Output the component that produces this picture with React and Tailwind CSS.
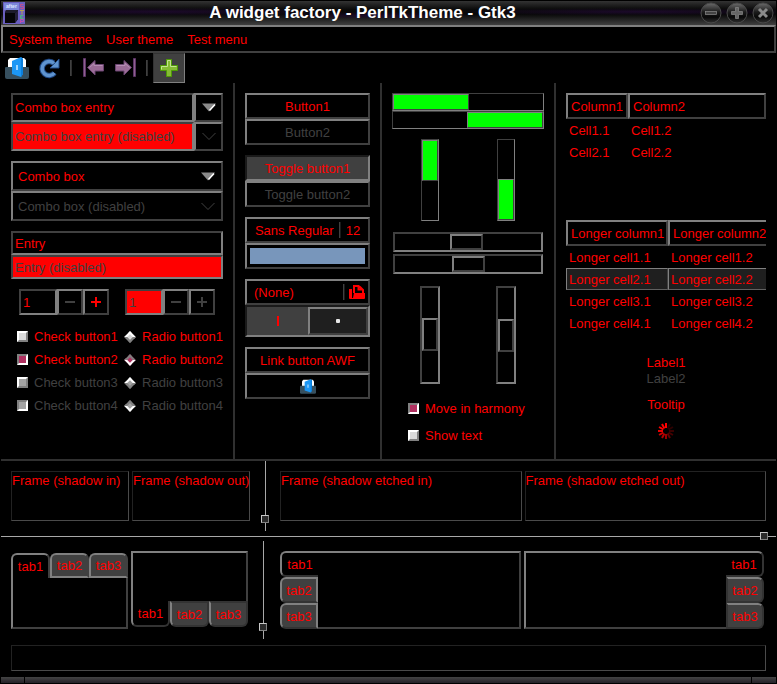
import React from "react";

const RAISED = "border-2 border-t-[#808080] border-l-[#808080] border-r-[#404040] border-b-[#404040]";
const SUNKEN = "border-2 border-t-[#404040] border-l-[#404040] border-r-[#808080] border-b-[#808080]";
const PRESSED = "border-2 border-t-[#1a1a1a] border-l-[#1a1a1a] border-r-[#808080] border-b-[#808080] bg-[#404040]";
const THIN_SUNKEN = "border border-t-[#404040] border-l-[#404040] border-r-[#808080] border-b-[#808080]";
const FRAME = "border border-t-[#222222] border-l-[#222222] border-r-[#4a4a4a] border-b-[#4a4a4a]";

/* ---------- icons ---------- */

function AfterStepIcon() {
  return (
    <svg width="22" height="22" viewBox="0 0 22 22" aria-hidden="true">
      <rect width="22" height="22" fill="#6a5fc0" />
      <rect x="1" y="1" width="15" height="7" fill="#7b86d8" />
      <path d="M3 8h12v9l-3 4H2V11z" fill="#050508" />
      <path d="M3 8h12l-3 3H2z" fill="#1d1c2c" />
      <path d="M12 11l3-3v9l-3 4z" fill="#24203a" />
      <text x="3" y="6" fontSize="5" fontFamily="Liberation Sans, sans-serif" fontWeight="bold" fill="#dfe6ff">after</text>
      <g fill="none" strokeWidth="1">
        <path d="M20.500 2.500h-3v2h3v2h-3" stroke="#c05090" />
        <path d="M17 8.500h4M19 8.500v4" stroke="#b8a050" />
        <path d="M20.500 13.500h-3v3h3M17.500 15h2" stroke="#50b080" />
        <path d="M17.500 21v-3.500h3v2h-3" stroke="#c050b0" />
      </g>
    </svg>
  );
}

function WindowButton({ kind, label }) {
  return (
    <button type="button" aria-label={label} className="block">
      <svg width="22" height="22" viewBox="0 0 22 22">
        <defs>
          <linearGradient id={"orb-" + kind} x1="0" y1="0" x2="0" y2="1">
            <stop offset="0" stopColor="#6c6c6c" />
            <stop offset="0.45" stopColor="#1c1c1c" />
            <stop offset="0.7" stopColor="#080808" />
            <stop offset="1" stopColor="#303030" />
          </linearGradient>
        </defs>
        <circle cx="11" cy="11" r="10" fill={"url(#orb-" + kind + ")"} stroke="#4a4a4a" />
        {kind === "min" && <rect x="5.5" y="9.5" width="11" height="3" fill="#444" stroke="#8a8a8a" strokeWidth="0.7" />}
        {kind === "max" && (
          <path d="M9.500 5.500h3v4h4v3h-4v4h-3v-4h-4v-3h4z" fill="#666" stroke="#8a8a8a" strokeWidth="0.7" />
        )}
        {kind === "close" && <path d="M7 7l8 8M15 7l-8 8" stroke="#8a8a8a" strokeWidth="3" />}
      </svg>
    </button>
  );
}

function DoorIcon({ width, height }) {
  return (
    <svg width={width} height={height} viewBox="0 0 24 22" aria-hidden="true">
      <path d="M3 3l2-2h14l2 2v9H3z" fill="#ffffff" />
      <path d="M0 11q0-1 1-1h22q1 0 1 1v9q0 2-2 2H2q-2 0-2-2z" fill="#37505f" />
      <path d="M7 4L16 0l2 2v15l-2 3-9-3z" fill="#1c97f5" />
      <path d="M16 0l2 2v15l-2 3z" fill="#0b7fdc" />
      <path d="M11 8h2v5h-2z" fill="#9fd6ff" />
    </svg>
  );
}

function ReloadIcon() {
  return (
    <svg width="21" height="21" viewBox="0 0 21 21" aria-hidden="true">
      <path d="M15.500 15A7 7 0 1 1 14.500 5" fill="none" stroke="#204a87" strokeWidth="5.500" />
      <path d="M20 1v9h-9z" fill="#5f94cf" stroke="#204a87" strokeWidth="1" />
      <path d="M15.500 15A7 7 0 1 1 15 5.500" fill="none" stroke="#5f94cf" strokeWidth="3.500" />
    </svg>
  );
}

function ArrowIcon({ last }) {
  return (
    <svg width="21" height="20" viewBox="0 0 21 20" aria-hidden="true">
      <g transform={last ? "translate(21 0) scale(-1 1)" : undefined}>
        <path d="M0.500 0.500h2v18h-2z" fill="#8f5f8f" stroke="#5c3566" />
        <path d="M4.500 9.500L12 2.500v4h8.500v6.500H12v4z" fill="#9b6c97" stroke="#6a4570" />
        <path d="M6.500 9.500l4.500-4v2h8.500" fill="none" stroke="#b58fb3" strokeWidth="1" />
      </g>
    </svg>
  );
}

function PlusIcon() {
  return (
    <svg width="18" height="18" viewBox="0 0 18 18" aria-hidden="true">
      <path d="M6.500 0.500h5v6h6v5h-6v6h-5v-6h-6v-5h6z" fill="#86bb35" stroke="#4e9a06" />
      <path d="M7.500 7.500v-6h3v6h6M1.500 10.500v-3h6" fill="none" stroke="#c5e592" />
    </svg>
  );
}

function FolderIcon() {
  return (
    <svg width="16" height="16" viewBox="0 0 16 16" aria-hidden="true">
      <path d="M0 5h3v9h1v1H1q-1 0-1-1z" fill="#f00" />
      <path d="M5 9V2h5l4 4v3M9.500 1v4.500H14" fill="none" stroke="#f00" strokeWidth="2" />
      <path d="M5 9h11v5q0 1-1 1H2l2-1z" fill="#f00" />
    </svg>
  );
}

function ArrowDown({ disabled }) {
  return (
    <svg width="14" height="9" viewBox="0 0 14 9" aria-hidden="true">
      {disabled ? (
        <path d="M0.500 1L7 7.500 13.500 1" fill="none" stroke="#404040" />
      ) : (
        <>
          <path d="M0 0.500h14L7 8.500z" fill="#8a8a8a" />
          <path d="M13 1.500L7.500 7.500" fill="none" stroke="#fff" strokeWidth="1.600" />
        </>
      )}
    </svg>
  );
}

function Spinner() {
  const spokes = [1, 0.15, 0.18, 0.22, 0.28, 0.4, 0.6, 0.7, 0.8, 0.9, 1, 1];
  return (
    <svg width="16" height="16" viewBox="0 0 16 16" role="img" aria-label="Loading">
      {spokes.map((o, i) => (
        <path key={i} d="M8 0v5" stroke="#f00" strokeWidth="2" opacity={o} transform={"rotate(" + i * 30 + " 8 8)"} />
      ))}
    </svg>
  );
}

/* ---------- small widgets ---------- */

function Button({ children, disabled, on }) {
  return (
    <button
      type="button"
      disabled={disabled}
      aria-pressed={on}
      className={`flex h-[26px] w-full items-center justify-center disabled:text-[#404040] ${on ? PRESSED : RAISED}`}
    >
      {children}
    </button>
  );
}

function VLine() {
  return <span className="h-4 w-0.5 border-l border-[#404040] bg-[#1a1a1a]" />;
}

function Check({ children, disabled, on, row = "h-[23px]" }) {
  return (
    <label className={`flex items-center gap-1.5 whitespace-nowrap ${row} ${disabled ? "text-[#404040]" : ""}`}>
      <input
        type="checkbox"
        defaultChecked={on}
        disabled={disabled}
        className={`size-[11px] shrink-0 appearance-none border-2 border-t-white border-l-white border-r-[#808080] border-b-[#808080] checked:border-t-[#808080] checked:border-l-[#808080] checked:border-r-white checked:border-b-white ${
          disabled ? "bg-[#a3a3a3]" : "bg-[#d9d9d9] checked:bg-[#b03060]"
        }`}
      />
      {children}
    </label>
  );
}

function Radio({ children, disabled, on, name }) {
  return (
    <label className={`flex h-[23px] items-center gap-1.5 whitespace-nowrap ${disabled ? "text-[#404040]" : ""}`}>
      <span className="flex w-[11px] pl-px">
        <input
          type="radio"
          name={name}
          defaultChecked={on}
          disabled={disabled}
          className={`size-2 shrink-0 rotate-45 appearance-none border-2 border-t-white border-l-white border-r-[#808080] border-b-[#808080] checked:border-t-[#808080] checked:border-l-[#808080] checked:border-r-white checked:border-b-white ${
            disabled ? "bg-[#a3a3a3]" : "bg-[#d9d9d9] checked:bg-[#b03060]"
          }`}
        />
      </span>
      {children}
    </label>
  );
}

function ComboEntry({ value, disabled }) {
  return (
    <div className="flex h-[29px]">
      <input
        aria-label="Combo box entry"
        defaultValue={value}
        disabled={disabled}
        className={`min-w-0 flex-1 px-0.5 disabled:bg-[#f00] disabled:text-[#404040] ${SUNKEN}`}
      />
      <button type="button" aria-label="Open list" disabled={disabled} className={`flex w-[29px] items-center justify-center ${RAISED}`}>
        <ArrowDown disabled={disabled} />
      </button>
    </div>
  );
}

function Combo({ value, disabled }) {
  return (
    <div className="relative">
      <select
        aria-label="Combo box"
        disabled={disabled}
        className={`block h-[30px] w-full appearance-none bg-black px-[5px] pt-px disabled:text-[#404040] disabled:opacity-100 ${RAISED}`}
      >
        <option>{value}</option>
      </select>
      <span className="pointer-events-none absolute inset-y-0 right-2 flex items-center">
        <ArrowDown disabled={disabled} />
      </span>
    </div>
  );
}

function Entry({ value, disabled }) {
  return (
    <input
      aria-label="Entry"
      defaultValue={value}
      disabled={disabled}
      className={`block h-6 w-full px-0.5 disabled:bg-[#f00] disabled:text-[#404040] ${SUNKEN}`}
    />
  );
}

function Spin({ disabled }) {
  const btn = `flex w-[26px] items-center justify-center text-[#f00] disabled:text-[#404040] ${RAISED}`;
  return (
    <div className="flex h-[26px]">
      <input
        aria-label="Amount"
        defaultValue="1"
        disabled={disabled}
        className={`w-[38px] px-0.5 disabled:bg-[#f00] disabled:text-[#404040] ${SUNKEN}`}
      />
      <button type="button" aria-label="Decrease" disabled={disabled} className={btn}>
        <svg width="10" height="10" viewBox="0 0 10 10"><path d="M0 5h10" stroke="#404040" strokeWidth="2" /></svg>
      </button>
      <button type="button" aria-label="Increase" disabled={disabled} className={btn}>
        <svg width="10" height="10" viewBox="0 0 10 10"><path d="M0 5h10M5 0v10" stroke="currentColor" strokeWidth="2" /></svg>
      </button>
    </div>
  );
}

const FILL = "border border-t-[#808080] border-l-[#808080] border-r-[#404040] border-b-[#404040] bg-[#0f0]";

function HBar({ inverted }) {
  return (
    <div role="progressbar" aria-label="Progress" aria-valuenow={50} className={`flex h-[18px] ${inverted ? "justify-end" : ""} ${THIN_SUNKEN}`}>
      <div className={`w-[76px] ${FILL}`} />
    </div>
  );
}

function VBar({ inverted }) {
  return (
    <div role="progressbar" aria-label="Progress" aria-valuenow={50} className={`flex h-[82px] w-[18px] flex-col ${inverted ? "justify-end" : ""} ${THIN_SUNKEN}`}>
      <div className={`h-[41px] ${FILL}`} />
    </div>
  );
}

const THUMB =
  "[&::-webkit-slider-thumb]:appearance-none [&::-webkit-slider-thumb]:border-2 [&::-webkit-slider-thumb]:border-t-[#808080] [&::-webkit-slider-thumb]:border-l-[#808080] [&::-webkit-slider-thumb]:border-r-[#404040] [&::-webkit-slider-thumb]:border-b-[#404040] [&::-webkit-slider-thumb]:bg-black";

function HScale({ value }) {
  return (
    <div className="p-px">
      <input
        type="range"
        aria-label="Horizontal scale"
        defaultValue={value}
        className={`block h-5 w-full appearance-none [&::-webkit-slider-thumb]:h-4 [&::-webkit-slider-thumb]:w-[33px] ${THUMB} ${SUNKEN}`}
      />
    </div>
  );
}

function VScale({ value }) {
  return (
    <input
      type="range"
      aria-label="Vertical scale"
      defaultValue={value}
      className={`block h-[98px] w-5 appearance-none [writing-mode:vertical-lr] [&::-webkit-slider-thumb]:h-[33px] [&::-webkit-slider-thumb]:w-4 ${THUMB} ${SUNKEN}`}
    />
  );
}

function Tree({ widths, heads, rows, selected, cut }) {
  return (
    <table className="w-full table-fixed border-separate border-spacing-0 text-left">
      <colgroup>
        <col className={widths} />
        <col />
      </colgroup>
      <thead>
        <tr>
          {heads.map((h, i) => (
            <th
              key={h}
              scope="col"
              className={`h-[26px] overflow-hidden p-0 pl-[3px] font-normal whitespace-nowrap ${RAISED} ${cut && i === 1 ? "border-r-0" : ""}`}
            >
              {h}
            </th>
          ))}
        </tr>
      </thead>
      <tbody>
        {rows.map((r, n) => (
          <tr key={n}>
            {r.map((c, i) => (
              <td
                key={c}
                className={`h-[22px] border-y border-l p-0 pl-0.5 whitespace-nowrap ${
                  n === selected ? "border-t-[#808080] border-b-[#606060] border-l-[#808080] bg-[#1f1f1f]" : "border-transparent"
                } ${n === selected && i === 0 ? "border-r border-r-[#404040]" : ""}`}
              >
                {c}
              </td>
            ))}
          </tr>
        ))}
      </tbody>
    </table>
  );
}

function Frame({ children }) {
  return <div className={`h-[50px] min-w-0 flex-1 overflow-hidden leading-[18px] whitespace-nowrap ${FRAME}`}>{children}</div>;
}

function Handle() {
  return <span className="block size-2 border border-t-[#c8c8c8] border-l-[#c8c8c8] border-r-[#808080] border-b-[#808080] bg-[#2b2b2b]" />;
}

function VSash() {
  return (
    <div className="flex w-2.5 flex-col items-center">
      <span className="w-px flex-1 bg-[#a8a8a8]" />
      <Handle />
      <span className="h-2 w-px bg-[#a8a8a8]" />
    </div>
  );
}

const TABS = ["tab1", "tab2", "tab3"];

function NotebookTop() {
  return (
    <div className="mt-0.5 flex min-w-0 flex-1 flex-col">
      <div role="tablist" className="flex h-[25px]">
        {TABS.map((t, i) => (
          <button
            key={t}
            type="button"
            role="tab"
            aria-selected={i === 0}
            className={`flex-1 rounded-t-md border-2 border-t-[#808080] border-l-[#808080] border-r-[#404040] ${
              i === 0 ? "border-b-0" : "border-b-[#808080] bg-[#404040]"
            }`}
          >
            {t}
          </button>
        ))}
      </div>
      <div role="tabpanel" className="flex-1 border-2 border-t-0 border-l-[#808080] border-r-[#404040] border-b-[#404040]" />
    </div>
  );
}

function NotebookBottom() {
  return (
    <div className="mb-0.5 flex min-w-0 flex-1 flex-col">
      <div role="tabpanel" className="flex-1 border-2 border-b-0 border-t-[#808080] border-l-[#808080] border-r-[#404040]" />
      <div role="tablist" className="flex h-[26px]">
        {TABS.map((t, i) => (
          <button
            key={t}
            type="button"
            role="tab"
            aria-selected={i === 0}
            className={`flex-1 rounded-b-md border-2 border-l-[#808080] border-r-[#333333] border-b-[#333333] ${
              i === 0 ? "border-t-0" : "border-t-[#333333] bg-[#404040]"
            }`}
          >
            {t}
          </button>
        ))}
      </div>
    </div>
  );
}

function NotebookLeft() {
  return (
    <div className="flex min-w-0 flex-1">
      <div role="tablist" className="flex w-[38px] flex-col">
        {TABS.map((t, i) => (
          <button
            key={t}
            type="button"
            role="tab"
            aria-selected={i === 0}
            className={`flex-1 rounded-l-md border-2 border-t-[#808080] border-l-[#808080] border-b-[#333333] ${
              i === 0 ? "border-r-0" : "border-r-[#808080] bg-[#404040]"
            }`}
          >
            {t}
          </button>
        ))}
      </div>
      <div role="tabpanel" className="flex-1 border-2 border-l-0 border-t-[#808080] border-r-[#404040] border-b-[#404040]" />
    </div>
  );
}

function NotebookRight() {
  return (
    <div className="flex min-w-0 flex-1">
      <div role="tabpanel" className="flex-1 border-2 border-r-0 border-t-[#808080] border-l-[#808080] border-b-[#404040]" />
      <div role="tablist" className="flex w-[38px] flex-col">
        {TABS.map((t, i) => (
          <button
            key={t}
            type="button"
            role="tab"
            aria-selected={i === 0}
            className={`flex-1 rounded-r-md border-2 border-t-[#808080] border-r-[#333333] border-b-[#333333] ${
              i === 0 ? "border-l-0" : "border-l-[#333333] bg-[#404040]"
            }`}
          >
            {t}
          </button>
        ))}
      </div>
    </div>
  );
}

const COLUMN = "flex flex-col gap-2.5 p-2.5";
const DIVIDED = "border-r-2 border-[#303030]";

export default function App() {
  return (
    <div className="flex min-h-screen flex-col bg-black px-px pt-px font-['Liberation_Sans',Arial,sans-serif] text-[13px] leading-[17px] text-[#f00]">
      <header className="flex h-6 items-center bg-[radial-gradient(ellipse_at_20%_45%,#2a0a4490,transparent_22%),radial-gradient(ellipse_at_48%_60%,#26083c90,transparent_18%),radial-gradient(ellipse_at_82%_45%,#2a0a4490,transparent_20%),linear-gradient(#333333,#0a0a0a_35%,#080808_55%,#404040)] px-0.5">
        <AfterStepIcon />
        <h1 className="flex-1 text-center text-[17px] leading-5 font-bold text-white">A widget factory - PerlTkTheme - Gtk3</h1>
        <div className="flex gap-1">
          <WindowButton kind="min" label="Minimize" />
          <WindowButton kind="max" label="Maximize" />
          <WindowButton kind="close" label="Close" />
        </div>
      </header>

      <nav className={`flex h-7 items-center gap-3.5 px-1.5 ${RAISED}`}>
        <button type="button">System theme</button>
        <button type="button">User theme</button>
        <button type="button">Test menu</button>
      </nav>

      <div role="toolbar" aria-label="Tools" className="flex h-[30px] items-center">
        <button type="button" aria-label="Open" className="flex w-8 justify-center"><DoorIcon width={24} height={22} /></button>
        <button type="button" aria-label="Reload" className="flex w-8 justify-center"><ReloadIcon /></button>
        <span className="mx-[5px] h-4 w-0.5 border-l border-[#404040] bg-[#303030]" />
        <button type="button" aria-label="First" className="flex w-8 justify-center"><ArrowIcon /></button>
        <button type="button" aria-label="Last" className="flex w-8 justify-center"><ArrowIcon last /></button>
        <span className="mx-[5px] h-4 w-0.5 border-l border-[#404040] bg-[#303030]" />
        <button type="button" aria-label="Add" aria-pressed="true" className="flex h-[30px] w-8 items-center justify-center border border-t-[#333333] border-l-[#333333] border-r-[#808080] border-b-[#808080] bg-[#404040]">
          <PlusIcon />
        </button>
      </div>

      <main className="flex border-b-2 border-[#303030]">
        <section className={`w-[234px] ${COLUMN} ${DIVIDED}`}>
          <div>
            <ComboEntry value="Combo box entry" />
            <ComboEntry value="Combo box entry (disabled)" disabled />
          </div>
          <div>
            <Combo value="Combo box" />
            <Combo value="Combo box (disabled)" disabled />
          </div>
          <div>
            <Entry value="Entry" />
            <Entry value="Entry (disabled)" disabled />
          </div>
          <div className="flex justify-around">
            <Spin />
            <Spin disabled />
          </div>
          <div className="flex justify-between pl-1.5">
            <div>
              <Check>Check button1</Check>
              <Check on>Check button2</Check>
              <Check disabled>Check button3</Check>
              <Check disabled on>Check button4</Check>
            </div>
            <div>
              <Radio name="a">Radio button1</Radio>
              <Radio name="a" on>Radio button2</Radio>
              <Radio name="b" disabled>Radio button3</Radio>
              <Radio name="b" disabled on>Radio button4</Radio>
            </div>
          </div>
        </section>

        <section className={`w-[147px] ${COLUMN} ${DIVIDED}`}>
          <div>
            <Button>Button1</Button>
            <Button disabled>Button2</Button>
          </div>
          <div>
            <Button on>Toggle button1</Button>
            <Button disabled>Toggle button2</Button>
          </div>
          <div>
            <Button>
              <span className="flex items-center gap-[5px] whitespace-nowrap">
                Sans Regular
                <VLine />
                12
              </span>
            </Button>
            <button type="button" aria-label="Pick a colour" className={`flex h-[26px] w-full p-[3px] ${RAISED}`}>
              <span className="h-4 flex-1 self-center bg-[#7896bb]" />
            </button>
          </div>
          <div>
            <button type="button" className={`flex h-[26px] w-full items-center pr-[3px] pl-[7px] ${RAISED}`}>
              <span className="flex-1 text-left">(None)</span>
              <VLine />
              <span className="pl-1"><FolderIcon /></span>
            </button>
            <button type="button" role="switch" aria-checked="true" aria-label="Switch" className={`flex h-8 w-full ${PRESSED}`}>
              <span className="flex flex-1 items-center justify-center self-stretch"><span className="h-2.5 w-0.5 bg-[#f00]" /></span>
              <span className={`flex w-[60px] items-center justify-center self-stretch bg-[#1f1f1f] ${RAISED}`}>
                <span className="size-1 rounded-[1px] bg-[#e8e8e8]" />
              </span>
            </button>
          </div>
          <div>
            <a href="#awf" className={`flex h-[26px] items-center justify-center whitespace-nowrap ${RAISED}`}>Link button AWF</a>
            <a href="#awf-icon" aria-label="AWF" className={`flex h-[26px] items-center justify-center ${RAISED}`}>
              <DoorIcon width={16} height={15} />
            </a>
          </div>
        </section>

        <section className={`w-[174px] ${COLUMN} ${DIVIDED}`}>
          <div>
            <HBar />
            <HBar inverted />
          </div>
          <div className="flex justify-around">
            <VBar />
            <VBar inverted />
          </div>
          <div>
            <HScale value={49} />
            <HScale value={50} />
          </div>
          <div className="flex justify-around py-px">
            <VScale value={49} />
            <VScale value={50} />
          </div>
          <div className="pl-4">
            <Check on row="h-[27px]">Move in harmony</Check>
            <Check row="h-[27px]">Show text</Check>
          </div>
        </section>

        <section className={`min-w-0 flex-1 ${COLUMN}`}>
          <div className="min-h-[117px]">
            <Tree
              widths="w-[62px]"
              heads={["Column1", "Column2"]}
              rows={[["Cell1.1", "Cell1.2"], ["Cell2.1", "Cell2.2"]]}
            />
          </div>
          <div className="min-h-[125px]">
            <Tree
              widths="w-[102px]"
              heads={["Longer column1", "Longer column2"]}
              selected={1}
              cut
              rows={[
                ["Longer cell1.1", "Longer cell1.2"],
                ["Longer cell2.1", "Longer cell2.2"],
                ["Longer cell3.1", "Longer cell3.2"],
                ["Longer cell4.1", "Longer cell4.2"],
              ]}
            />
          </div>
          <div className="text-center leading-4">
            <p>Label1</p>
            <p className="text-[#404040]">Label2</p>
          </div>
          <p className="text-center leading-4">Tooltip</p>
          <div className="flex justify-center"><Spinner /></div>
        </section>
      </main>

      <div className="flex">
        <div className="flex w-[259px] gap-[3px] p-2.5">
          <Frame>Frame (shadow in)</Frame>
          <Frame>Frame (shadow out)</Frame>
        </div>
        <VSash />
        <div className="flex min-w-0 flex-1 gap-[3px] p-2.5">
          <Frame>Frame (shadow etched in)</Frame>
          <Frame>Frame (shadow etched out)</Frame>
        </div>
      </div>

      <div className="flex h-2.5 items-center">
        <span className="h-px flex-1 bg-[#a8a8a8]" />
        <Handle />
        <span className="h-px w-2 bg-[#a8a8a8]" />
      </div>

      <div className="flex h-[98px]">
        <div className="flex w-[257px] gap-[3px] p-2.5">
          <NotebookTop />
          <NotebookBottom />
        </div>
        <VSash />
        <div className="flex min-w-0 flex-1 gap-[3px] px-3 py-2.5">
          <NotebookLeft />
          <NotebookRight />
        </div>
      </div>

      <div className="px-2.5 py-1.5">
        <textarea aria-label="Text" className={`block h-[26px] w-full resize-none ${FRAME}`} />
      </div>

      <footer className="flex h-1.5 gap-px">
        <span className="w-[23px] bg-linear-to-b from-[#444444] to-[#262229]" />
        <span className="flex-1 bg-linear-to-b from-[#444444] to-[#262229]" />
        <span className="w-6 bg-linear-to-b from-[#444444] to-[#262229]" />
      </footer>
    </div>
  );
}
